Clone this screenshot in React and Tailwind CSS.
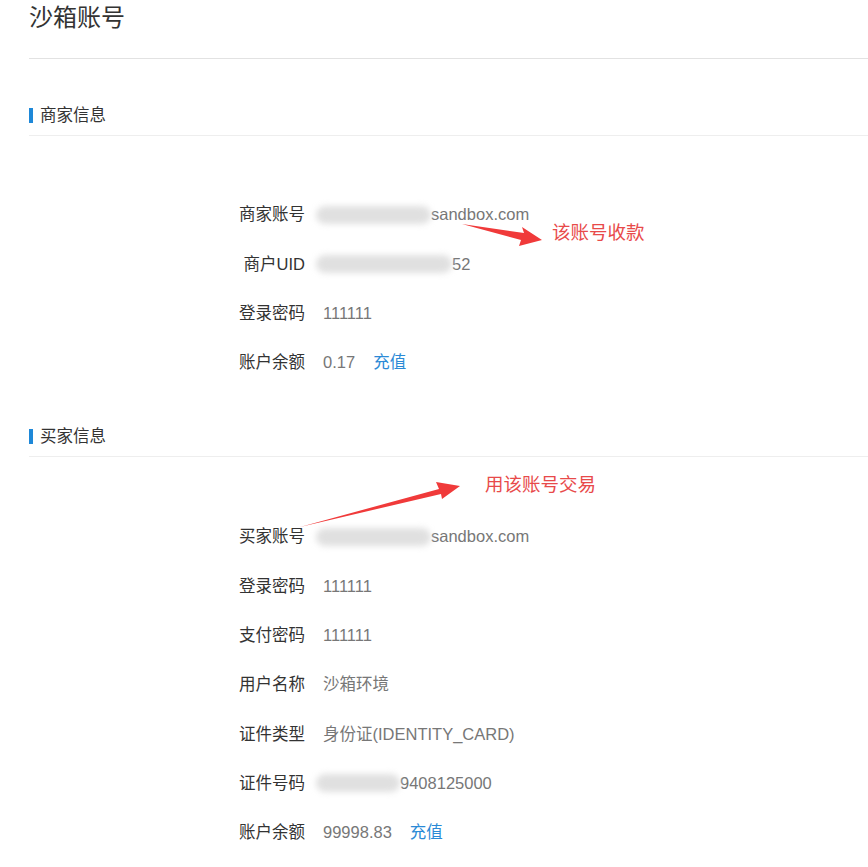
import React from 'react';

const font = { fontFamily: '"Liberation Sans", "Noto Sans CJK SC", sans-serif' };

const Blur = ({ w }) => (
  <span className={`inline-block h-[18px] ${w} -ml-[7px] rounded-full bg-[#e0e0e0] blur-[3px]`} />
);

const Row = ({ label, children }) => (
  <div className="flex h-[49.3px] items-center">
    <div className="w-[80px] text-right text-[16.5px] text-[#333]">{label}</div>
    <div className="ml-[18px] flex items-center text-[16.5px] text-[#777]">{children}</div>
  </div>
);

const SectionHead = ({ title }) => (
  <div className="flex h-[40px] items-center border-b border-[#eee]">
    <span className="h-[15px] w-[4px] bg-[#1e88d8]" />
    <span className="ml-[7px] text-[16.5px] text-[#333]">{title}</span>
  </div>
);

const Charge = () => <span className="ml-[18px] text-[#2b8ad6]">充值</span>;

export default function App() {
  return (
    <div className="relative min-h-[867px] bg-white pl-[29px]" style={font}>
      {/* 标题 */}
      <h1 className="text-[24px] leading-[36px] text-[#333]">沙箱账号</h1>
      <div className="mt-[22px] h-px bg-[#e2e2e2]" />

      {/* 商家信息 */}
      <div className="mt-[37px]">
        <SectionHead title="商家信息" />
        <div className="pl-[196px] pt-[54px]">
          <Row label="商家账号">
            <Blur w="w-[115px]" />
            <span>sandbox.com</span>
          </Row>
          <Row label="商户UID">
            <Blur w="w-[136px]" />
            <span>52</span>
          </Row>
          <Row label="登录密码">111111</Row>
          <Row label="账户余额">
            <span>0.17</span>
            <Charge />
          </Row>
        </div>
      </div>

      {/* 买家信息 */}
      <div className="mt-[30px]">
        <SectionHead title="买家信息" />
        <div className="pl-[196px] pt-[55px]">
          <Row label="买家账号">
            <Blur w="w-[115px]" />
            <span>sandbox.com</span>
          </Row>
          <Row label="登录密码">111111</Row>
          <Row label="支付密码">111111</Row>
          <Row label="用户名称">沙箱环境</Row>
          <Row label="证件类型">身份证(IDENTITY_CARD)</Row>
          <Row label="证件号码">
            <Blur w="w-[84px]" />
            <span>9408125000</span>
          </Row>
          <Row label="账户余额">
            <span>99998.83</span>
            <Charge />
          </Row>
        </div>
      </div>

      {/* 标注 */}
      <svg className="pointer-events-none absolute left-0 top-0" width="868" height="867">
        <polygon points="462,224 524,233 522,227 542,240 519,246 521,240" fill="#f03a3a" />
        <polygon points="300,527 439,489 436,482 460,486 442,499 441,494" fill="#f03a3a" />
      </svg>
      <span className="absolute left-[552px] top-[219px] text-[18.5px] text-[#e84a4a]">该账号收款</span>
      <span className="absolute left-[485px] top-[471px] text-[18.5px] text-[#e84a4a]">用该账号交易</span>
    </div>
  );
}
